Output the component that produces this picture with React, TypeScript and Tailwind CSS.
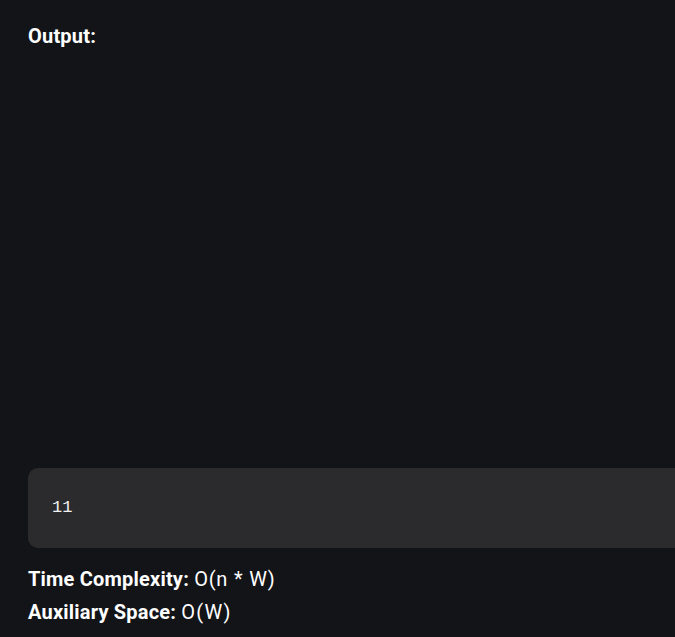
export default function App() {
  return (
    <div
      className="min-h-[637px] w-[675px] overflow-hidden bg-[#131418] text-white"
      style={{ fontFamily: "Roboto, 'Noto Sans', sans-serif" }}
    >
      <div className="pl-[28px] pt-[22px]">
        <p className="text-[20px] font-bold leading-[28px] tracking-[0.2px]">Output:</p>
        <div className="h-[418px]" />
        <div className="-mr-[20px] flex h-[80px] items-center rounded-l-[10px] bg-[#2b2b2d] pl-[24px]">
          <span className="text-[17px] text-[#f2f2f2]" style={{ fontFamily: "'Liberation Mono', monospace" }}>
            11
          </span>
        </div>
        <div className="mt-[15px] text-[20px] leading-[33px] tracking-[0.2px]">
          <p>
            <span className="font-bold">Time Complexity:</span>{" "}
            <span className="tracking-[0.8px]">O(n * W)</span>
          </p>
          <p>
            <span className="font-bold">Auxiliary Space:</span>{" "}
            <span className="tracking-[1.2px]">O(W)</span>
          </p>
        </div>
      </div>
    </div>
  );
}
